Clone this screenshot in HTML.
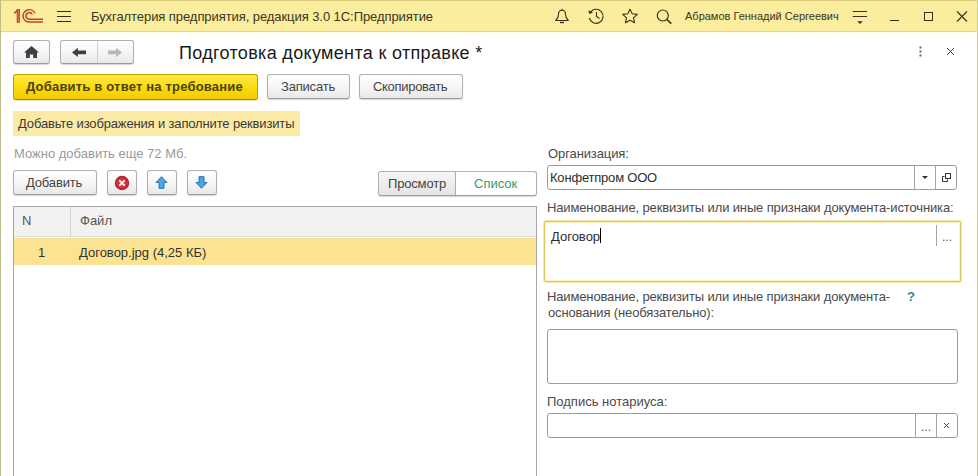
<!DOCTYPE html>
<html lang="ru">
<head>
<meta charset="utf-8">
<title>Подготовка документа к отправке</title>
<style>
*{box-sizing:border-box;margin:0;padding:0}
html,body{width:978px;height:476px;overflow:hidden;background:#fff}
body{font-family:"Liberation Sans",sans-serif;font-size:13px;color:#333;position:relative}
.abs{position:absolute}
.t{position:absolute;white-space:nowrap;line-height:16px}
#topbar{left:0;top:0;width:978px;height:32px;background:#fbed9e;border-top:1px solid #d9cc7c;border-bottom:1px solid #e3d68b}
#leftedge{left:0;top:0;width:1px;height:476px;background:#bdbb8c}
.btn{position:absolute;border:1px solid #b0b0b0;border-bottom-color:#9c9c9c;border-radius:3px;background:linear-gradient(#ffffff,#f7f7f7 45%,#e9e9e9);box-shadow:0 1px 1px rgba(0,0,0,.16)}
.ybtn{background:linear-gradient(#ffe93f,#fbd90f 55%,#f3cc00);border-color:#b5a000;border-bottom-color:#a08c00;box-shadow:0 1px 0 rgba(160,140,0,.25)}
.inp{position:absolute;border:1px solid #9c9c9c;border-radius:3px;background:#fff}
.lbl{color:#4a4a4a}
</style>
</head>
<body>
<div id="topbar" class="abs"></div>
<div id="leftedge" class="abs"></div>

<!-- logo -->
<svg class="abs" style="left:12px;top:7px" width="34" height="18" viewBox="12 7 34 18">
  <g fill="none" stroke="#bd4529">
    <path d="M14.300 13.300L17.400 10.300" stroke-width="1.700"/>
    <path d="M18.300 9V22.800" stroke-width="3.200"/>
    <path d="M34.900 13.300A6.200 6.200 0 1 0 29.300 22.100H43" stroke-width="1.500"/>
    <path d="M32.300 14.500A3.300 3.300 0 1 0 29.300 19.200H43" stroke-width="1.500"/>
  </g>
  <path d="M18.300 9.800V22" stroke="#e8705c" stroke-width="1.200" fill="none"/>
</svg>
<!-- hamburger -->
<svg class="abs" style="left:57px;top:10px" width="16" height="14" viewBox="0 0 16 14">
  <g stroke="#332c0a" stroke-width="1"><path d="M0 1.500H14M0 6.500H14M0 11.500H14"/></g>
</svg>
<div class="t" style="left:91px;top:9px;font-size:13px;letter-spacing:-0.07px;color:#3a3521">Бухгалтерия предприятия, редакция 3.0 1С:Предприятие</div>

<!-- top icons -->
<svg class="abs" style="left:553px;top:7px" width="18" height="18" viewBox="553 7 18 18">
  <g fill="none" stroke="#39321a" stroke-width="1.100" stroke-linejoin="round"><path d="M562 10.300c-2.300 0-3.500 1.700-3.500 4 0 3-1.200 4.700-2.800 6.200h12.600c-1.600-1.500-2.800-3.200-2.800-6.200 0-2.300-1.200-4-3.500-4z"/><path d="M562 8.800v1.500"/><path d="M560 22.500h4" stroke-width="1.400"/></g>
</svg>
<svg class="abs" style="left:587px;top:7px" width="18" height="18" viewBox="0 0 18 18">
  <g fill="none" stroke="#39321a" stroke-width="1.100"><path d="M3.200 5.500A7 7 0 1 1 2.300 11"/><path d="M9.500 5v4.500l3 2"/></g><path d="M1.200 3.200l1.200 3.800 3.600-1.600z" fill="#39321a"/>
</svg>
<svg class="abs" style="left:621px;top:7px" width="18" height="18" viewBox="0 0 18 18">
  <path fill="none" stroke="#39321a" stroke-width="1.100" stroke-linejoin="round" d="M9 2.200l2.200 4.600 5.100.6-3.800 3.400 1.100 5L9 13.300 4.400 15.800l1.100-5L1.700 7.400l5.100-.6z"/>
</svg>
<svg class="abs" style="left:655px;top:6.500px" width="18" height="18" viewBox="0 0 18 18">
  <g fill="none" stroke="#39321a"><circle cx="7.800" cy="8.500" r="5.500" stroke-width="1.200"/><path d="M11.800 12.500l4.500 4.200" stroke-width="1.600"/></g>
</svg>
<div class="t" style="left:685px;top:8px;font-size:11px;color:#3a3521">Абрамов Геннадий Сергеевич</div>
<svg class="abs" style="left:851px;top:8px" width="18" height="18" viewBox="851 8 18 18">
  <path d="M852.700 11.500H867M852.700 16.500H867" fill="none" stroke="#39321a" stroke-width="1"/><path d="M857.200 21.200h5.600L860 24z" fill="#39321a"/>
</svg>
<svg class="abs" style="left:888px;top:18px" width="14" height="4" viewBox="888 18 14 4"><path d="M890 20.500H899" stroke="#39321a" stroke-width="1"/></svg>
<svg class="abs" style="left:922px;top:10px" width="14" height="14" viewBox="922 10 14 14"><rect x="924.500" y="12.500" width="8" height="8" fill="none" stroke="#39321a" stroke-width="1"/></svg>
<svg class="abs" style="left:955px;top:10px" width="14" height="14" viewBox="955 10 14 14"><path d="M957 11.500l10 10M967 11.500l-10 10" stroke="#39321a" stroke-width="1.100"/></svg>

<!-- nav row -->
<div class="abs" style="left:1px;top:32px;width:976px;height:8px;background:linear-gradient(#fffdf0,#ffffff)"></div>
<div class="btn" style="left:13px;top:40px;width:37px;height:24px"></div>
<svg class="abs" style="left:23px;top:46px" width="17" height="13" viewBox="23 46 17 13">
  <path fill="#404040" d="M31.500 46.100L24 52.600h2v5.300h3.800v-3.400h3.400v3.400H37v-5.300h2z"/>
</svg>
<div class="btn" style="left:60px;top:40px;width:74px;height:24px"></div>
<div class="abs" style="left:97px;top:41px;width:1px;height:22px;background:#d0d0d0"></div>
<svg class="abs" style="left:71px;top:47px" width="16" height="11" viewBox="71 47 16 11"><path fill="#404040" d="M72 52.400L77.900 47.700v2.900H86v3.600H77.900v2.900z"/></svg>
<svg class="abs" style="left:107px;top:47px" width="16" height="11" viewBox="107 47 16 11"><path fill="#b7b7b7" d="M122 52.400L116.100 47.700v2.900H108v3.600h8.100v2.900z"/></svg>
<div class="t" style="left:179px;top:42px;font-size:18px;letter-spacing:0.33px;line-height:22px;color:#1a1a1a">Подготовка документа к отправке *</div>
<svg class="abs" style="left:918px;top:45px" width="6" height="14" viewBox="0 0 6 14"><g fill="#666"><rect x="1.500" y="1.500" width="2" height="2"/><rect x="1.500" y="5.500" width="2" height="2"/><rect x="1.500" y="9.500" width="2" height="2"/></g></svg>
<svg class="abs" style="left:946px;top:47px" width="9" height="9" viewBox="0 0 9 9"><path d="M1 1l7 7M8 1l-7 7" stroke="#444" stroke-width="1"/></svg>

<!-- command bar -->
<div class="btn ybtn" style="left:13px;top:74px;width:245px;height:26px"></div>
<div class="t" style="left:26px;top:79px;font-weight:bold;letter-spacing:0.19px;color:#4a4208">Добавить в ответ на требование</div>
<div class="btn" style="left:267px;top:74px;width:83px;height:25px"></div>
<div class="t" style="left:281px;top:79px;letter-spacing:-0.2px;color:#444">Записать</div>
<div class="btn" style="left:359px;top:74px;width:104px;height:25px"></div>
<div class="t" style="left:373px;top:79px;letter-spacing:-0.3px;color:#444">Скопировать</div>

<div class="abs" style="left:13px;top:111px;width:287px;height:25px;background:#fbeaa6"></div>
<div class="t" style="left:18px;top:116px;letter-spacing:-0.15px;color:#3a3a3a">Добавьте изображения и заполните реквизиты</div>

<div class="t" style="left:14px;top:146px;color:#9a9a9a">Можно добавить еще 72 Мб.</div>

<!-- left toolbar -->
<div class="btn" style="left:13px;top:170px;width:84px;height:25px"></div>
<div class="t" style="left:26px;top:175px;letter-spacing:-0.16px;color:#444">Добавить</div>
<div class="btn" style="left:107px;top:170px;width:30px;height:25px"></div>
<div class="btn" style="left:147px;top:170px;width:30px;height:25px"></div>
<div class="btn" style="left:187px;top:170px;width:30px;height:25px"></div>
<svg class="abs" style="left:114px;top:175px" width="16" height="16" viewBox="0 0 16 16"><circle cx="8" cy="8" r="7.200" fill="#b81d28"/><circle cx="8" cy="8" r="5.800" fill="#d6303a"/><path d="M5.300 5.300l5.400 5.400M10.700 5.300l-5.400 5.400" stroke="#fff" stroke-width="1.900"/></svg>
<svg class="abs" style="left:155px;top:176px" width="13" height="13" viewBox="0 0 13 13"><path d="M6.500 0.700L12 6.500H9v5.800H4V6.500H1z" fill="#46a6e6" stroke="#2477b3" stroke-width="1" stroke-linejoin="round"/></svg>
<svg class="abs" style="left:195px;top:176px" width="13" height="13" viewBox="0 0 13 13"><path d="M6.500 12.300L12 6.500H9V0.700H4v5.800H1z" fill="#46a6e6" stroke="#2477b3" stroke-width="1" stroke-linejoin="round"/></svg>

<div class="btn" style="left:378px;top:171px;width:78px;height:25px;border-radius:3px 0 0 3px;background:linear-gradient(#f6f6f6,#e4e4e4)"></div>
<div class="btn" style="left:455px;top:171px;width:82px;height:25px;border-radius:0 3px 3px 0;background:#fff"></div>
<div class="t" style="left:388px;top:176px;letter-spacing:-0.17px;color:#444">Просмотр</div>
<div class="t" style="left:474px;top:176px;color:#3a9a6a">Список</div>

<!-- table -->
<div class="abs" style="left:13px;top:206px;width:524px;height:280px;border:1px solid #a8a8a8;background:#fff"></div>
<div class="abs" style="left:14px;top:207px;width:522px;height:30px;background:#f2f2f2;border-bottom:1px solid #dedede"></div>
<div class="abs" style="left:70px;top:207px;width:1px;height:30px;background:#d4d4d4"></div>
<div class="t" style="left:22px;top:213px;color:#555">N</div>
<div class="t" style="left:80px;top:213px;color:#555">Файл</div>
<div class="abs" style="left:14px;top:238px;width:522px;height:27px;background:#fbe391"></div>
<div class="t" style="left:38px;top:245px;color:#333">1</div>
<div class="t" style="left:79px;top:245px;color:#333">Договор.jpg (4,25 КБ)</div>

<!-- right side -->
<div class="t lbl" style="left:548px;top:146px;letter-spacing:-0.1px">Организация:</div>
<div class="inp" style="left:547px;top:165px;width:410px;height:25px"></div>
<div class="abs" style="left:914px;top:166px;width:1px;height:23px;background:#a4a4a4"></div>
<div class="abs" style="left:935px;top:166px;width:1px;height:23px;background:#a4a4a4"></div>
<div class="t" style="left:550px;top:170px;letter-spacing:-0.2px;color:#2e2e2e">Конфетпром ООО</div>
<svg class="abs" style="left:922px;top:176px" width="6" height="3" viewBox="0 0 6 3"><path d="M0 0h6L3 3z" fill="#333"/></svg>
<svg class="abs" style="left:942px;top:173px" width="10" height="10" viewBox="0 0 10 10"><g fill="none" stroke="#333" stroke-width="1"><rect x="3.500" y="0.500" width="5" height="5"/><path d="M2.500 3.500H0.500V8.500H5.500V6.500"/></g></svg>

<div class="t lbl" style="left:547px;top:200px;letter-spacing:-0.135px">Наименование, реквизиты или иные признаки документа-источника:</div>
<div class="inp" style="left:544px;top:221px;width:417px;height:61px;border:1px solid #d9c95c;border-radius:2px;box-shadow:0 0 0 1px #f5eaa8, inset 0 0 0 1px #fbf3c4"></div>
<div class="t" style="left:551px;top:229px;color:#2e2e2e">Договор</div>
<div class="abs" style="left:600px;top:228px;width:1px;height:15px;background:#000"></div>
<div class="abs" style="left:936px;top:225px;width:1px;height:21px;background:#a4a4a4"></div>
<div class="t" style="left:942px;top:229px;color:#555;font-size:12px">...</div>

<div class="t lbl" style="left:547px;top:289px;letter-spacing:-0.14px">Наименование, реквизиты или иные признаки документа-</div>
<div class="t lbl" style="left:548px;top:305px;letter-spacing:-0.14px">основания (необязательно):</div>
<div class="t" style="left:907px;top:289px;color:#31859c;font-weight:bold">?</div>
<div class="inp" style="left:547px;top:329px;width:411px;height:55px"></div>

<div class="t lbl" style="left:547px;top:394px">Подпись нотариуса:</div>
<div class="inp" style="left:547px;top:413px;width:411px;height:25px"></div>
<div class="abs" style="left:915px;top:414px;width:1px;height:23px;background:#a4a4a4"></div>
<div class="abs" style="left:936px;top:414px;width:1px;height:23px;background:#a4a4a4"></div>
<div class="t" style="left:921px;top:419px;color:#555;font-size:12px">...</div>
<svg class="abs" style="left:943px;top:422px" width="7" height="7" viewBox="0 0 7 7"><path d="M1 1l5 5M6 1l-5 5" stroke="#444" stroke-width="1"/></svg>
<div id="rightedge" class="abs" style="left:977px;top:0;width:1px;height:476px;background:#d2cc98"></div>
</body>
</html>
